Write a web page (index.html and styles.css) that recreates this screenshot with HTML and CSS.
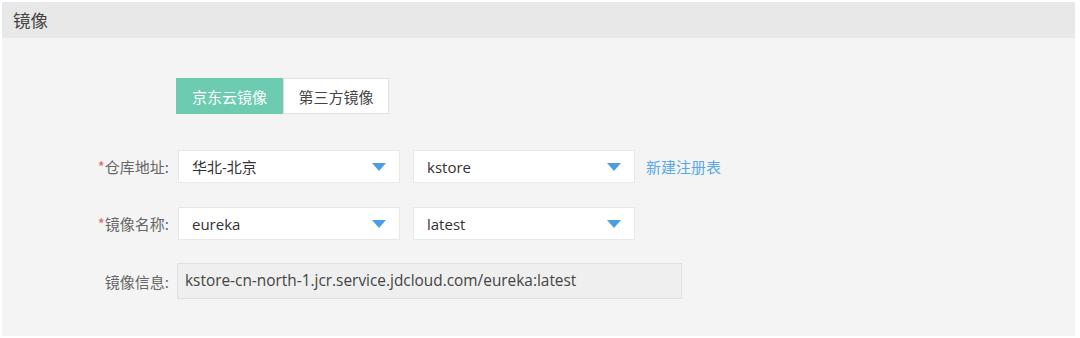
FILE: index.html
```html
<!DOCTYPE html>
<html lang="zh">
<head>
<meta charset="utf-8">
<link rel="stylesheet" href="styles.css">
</head>
<body>
<div class="panel">
  <div class="panel-head">镜像</div>
  <div class="panel-body">
    <div class="tabs">
      <div class="tab active">京东云镜像</div>
      <div class="tab">第三方镜像</div>
    </div>
    <div class="row">
      <div class="label"><span class="req">*</span>仓库地址:</div>
      <div class="select"><span>华北-北京</span><svg class="caret" width="14" height="8" viewBox="0 0 14 8"><path d="M0 0H14L7 8Z"/></svg></div>
      <div class="select"><span>kstore</span><svg class="caret" width="14" height="8" viewBox="0 0 14 8"><path d="M0 0H14L7 8Z"/></svg></div>
      <a class="link">新建注册表</a>
    </div>
    <div class="row">
      <div class="label"><span class="req">*</span>镜像名称:</div>
      <div class="select"><span>eureka</span><svg class="caret" width="14" height="8" viewBox="0 0 14 8"><path d="M0 0H14L7 8Z"/></svg></div>
      <div class="select"><span>latest</span><svg class="caret" width="14" height="8" viewBox="0 0 14 8"><path d="M0 0H14L7 8Z"/></svg></div>
    </div>
    <div class="row info-row">
      <div class="label">镜像信息:</div>
      <div class="info">kstore-cn-north-1.jcr.service.jdcloud.com/eureka:latest</div>
    </div>
  </div>
</div>
</body>
</html>
```

FILE: styles.css
```css
html, body {
  margin: 0;
  padding: 0;
  background: #ffffff;
}
body {
  font-family: "Open Sans", "Noto Sans CJK SC", sans-serif;
  font-size: 14px;
  color: #333;
}
.panel {
  margin: 2px 0 0 2px;
  width: 1073px;
  height: 334px;
  background: #f4f4f4;
  display: flex;
  flex-direction: column;
}
.panel-head {
  height: 36px;
  background: #e8e8e8;
  color: #444;
  font-size: 17.5px;
  line-height: 36px;
  padding-left: 11px;
  font-family: "Noto Sans CJK SC", sans-serif;
}
.panel-body {
  padding-top: 40px;
  display: flex;
  flex-direction: column;
}
.tabs {
  display: flex;
  margin-left: 174px;
  margin-bottom: 36px;
}
.tab {
  height: 36px;
  line-height: 36px;
  width: 106px;
  text-align: center;
  font-family: "Noto Sans CJK SC", sans-serif;
  font-size: 15px;
  background: #fff;
  color: #444;
  border: 1px solid #e2e2e2;
  box-sizing: border-box;
}
.tab.active {
  width: 107px;
  background: #6ccbb0;
  color: #fff;
  border-color: #6ccbb0;
}
.row {
  display: flex;
  align-items: center;
  margin-bottom: 24px;
  height: 33px;
}
.info-row {
  height: 36px;
  margin-top: -1px;
}
.label {
  width: 176px;
  text-align: right;
  padding-right: 9px;
  box-sizing: border-box;
  color: #666;
  font-family: "Noto Sans CJK SC", sans-serif;
  font-size: 15px;
}
.req {
  color: #e06666;
}
.select {
  width: 222px;
  height: 33px;
  background: #fff;
  border: 1px solid #e8e8e8;
  box-sizing: border-box;
  display: flex;
  align-items: center;
  justify-content: space-between;
  padding: 0 13px 0 13px;
  margin-right: 13px;
  color: #333;
  font-size: 15px;
}
.select span {
  font-family: "Open Sans", "Noto Sans CJK SC", sans-serif;
}
.caret {
  fill: #4a9ee8;
}
.link {
  color: #5aa8e8;
  font-family: "Noto Sans CJK SC", sans-serif;
  font-size: 15px;
  margin-left: -2px;
}
.info {
  width: 505px;
  height: 36px;
  line-height: 34px;
  box-sizing: border-box;
  background: #efefef;
  border: 1px solid #e0e0e0;
  padding-left: 7px;
  color: #444;
  font-size: 15.4px;
  margin-left: -1px;
}
```
